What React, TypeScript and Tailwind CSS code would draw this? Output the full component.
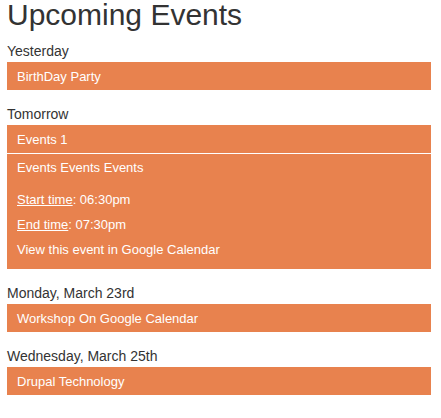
const events = [
  { label: 'Yesterday', title: 'BirthDay Party' },
  { label: 'Tomorrow', title: 'Events 1', open: true },
  { label: 'Monday, March 23rd', title: 'Workshop On Google Calendar' },
  { label: 'Wednesday, March 25th', title: 'Drupal Technology' },
];

function EventBar({ title }: { title: string }) {
  return (
    <div className="bg-[#e8824e] pl-[10px] pr-[10px] pt-[7px] pb-[6px] text-[13px] leading-[15px] text-white">
      {title}
    </div>
  );
}

function EventDetails() {
  return (
    <div className="mt-px bg-[#e8824e] px-[10px] pt-[6px] pb-[12px] text-[13px] leading-[15px] text-white">
      <div>Events Events Events</div>
      <div className="mt-[17px]">
        <span className="underline">Start time</span>: 06:30pm
      </div>
      <div className="mt-[10px]">
        <span className="underline">End time</span>: 07:30pm
      </div>
      <div className="mt-[10px]">View this event in Google Calendar</div>
    </div>
  );
}

export default function App() {
  return (
    <div
      className="min-h-[418px] bg-white pl-[7px] text-[#333333]"
      style={{ fontFamily: '"Liberation Sans", Arial, sans-serif' }}
    >
      <div className="w-[424px]">
        <h1 className="mb-[11px] h-[30px] text-[30px] leading-[30px] font-normal">Upcoming Events</h1>
        {events.map((ev, i) => (
          <div key={ev.label} className={i === 0 ? '' : 'mt-[14px]'}>
            <div className="text-[14px] leading-[21px]">{ev.label}</div>
            <EventBar title={ev.title} />
            {ev.open && <EventDetails />}
          </div>
        ))}
      </div>
    </div>
  );
}
